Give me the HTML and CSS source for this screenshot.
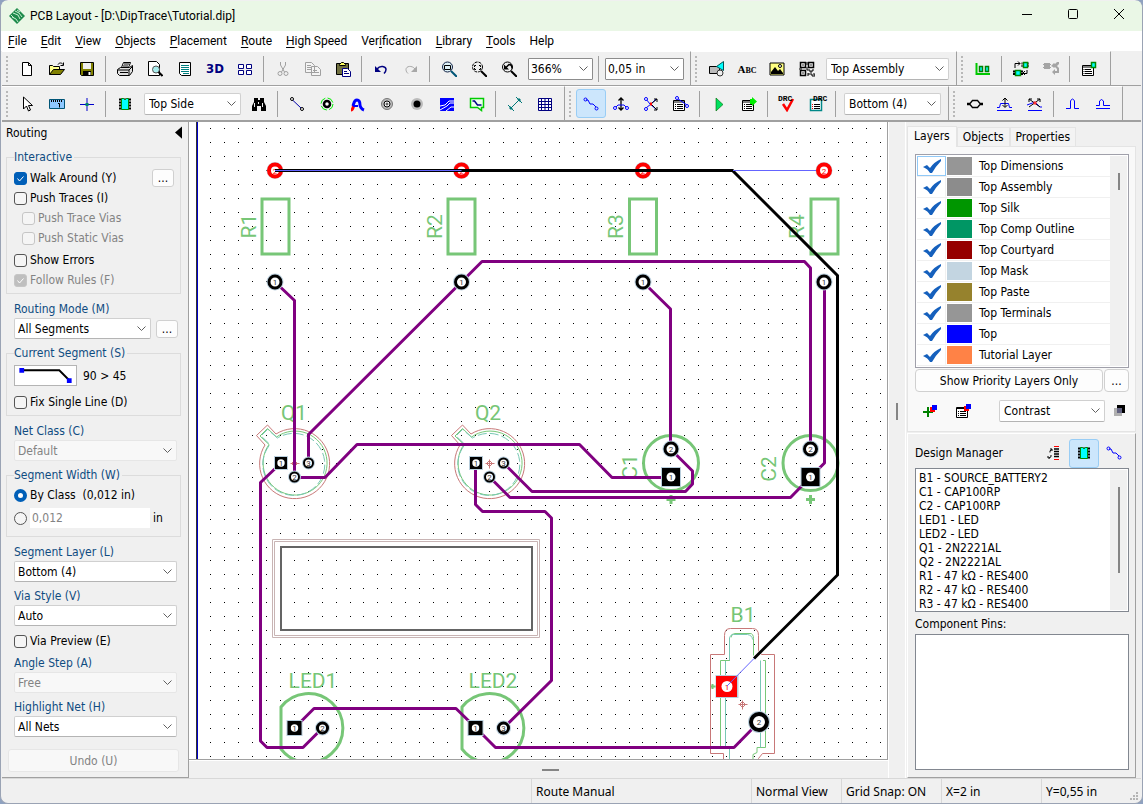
FILE: index.html
```html
<!DOCTYPE html>
<html lang="en">
<head>
<meta charset="utf-8">
<title>PCB Layout</title>
<link rel="stylesheet" href="styles.css">
</head>
<body>
<div class="window">
<header class="titlebar">
  <svg class="logo" viewBox="0 0 16 16"><path d="M8 0l8 8-8 8-8-8z" fill="#1d8a4b"/><path d="M2 7l3 3M4 5l5 2 2 4M6 3l4 2 3 4M3 9l4 2 2 3M8 2l3 2" stroke="#c9f0d2" fill="none"/></svg>
  <h1>PCB Layout - [D:\DipTrace\Tutorial.dip]</h1>
  <div class="caption-buttons">
    <button aria-label="Minimize"><svg viewBox="0 0 12 12"><path d="M1 6.500h10" stroke="#000"/></svg></button>
    <button aria-label="Maximize"><svg viewBox="0 0 12 12"><rect x="1.500" y="1.500" width="9" height="9" rx="1" fill="none" stroke="#000"/></svg></button>
    <button aria-label="Close"><svg viewBox="0 0 12 12"><path d="M1 1l10 10M11 1L1 11" stroke="#000"/></svg></button>
  </div>
</header>
<nav class="menu">
  <button><u>F</u>ile</button><button><u>E</u>dit</button><button><u>V</u>iew</button><button><u>O</u>bjects</button><button><u>P</u>lacement</button><button><u>R</u>oute</button><button><u>H</u>igh Speed</button><button>Ver<u>i</u>fication</button><button><u>L</u>ibrary</button><button><u>T</u>ools</button><button>Help</button>
</nav>

<div class="toolrow">
  <div class="band">
    <button class="tool" aria-label="New"><svg viewBox="0 0 16 16"><path d="M3.500 1.500h6l3 3v10h-9zM9.500 1.500v3h3" fill="#fff" stroke="#000"/></svg></button>
    <button class="tool" aria-label="Open"><svg viewBox="0 0 16 16"><path d="M.5 13.500v-9h3l1 1h6v3" fill="#ffff8c" stroke="#000"/><path d="M.5 13.500l4-5h11l-4 5z" fill="#808000" stroke="#000"/><path d="M9 3.500c1-2 4-2 5 0m.5-2v3h-3" fill="none" stroke="#000"/></svg></button>
    <button class="tool" aria-label="Save"><svg viewBox="0 0 16 16"><path d="M1.500 1.500h13v13h-12l-1-1z" fill="#808000" stroke="#000"/><path d="M4 2h8v6H4z" fill="#f0f0f0"/><path d="M4 10h8v5H4z"/><path d="M9.500 11h2v3h-2z" fill="#fff"/></svg></button>
    <i class="sep"></i>
    <button class="tool" aria-label="Print"><svg viewBox="0 0 16 16"><path d="M4.500 6.500l2-5h7l-2 5" fill="#fff" stroke="#000"/><path d="M.5 8.500l3-2h9l3-2v6l-3 4h-10l-2-2z" fill="#e0e0e0" stroke="#000"/><path d="M1 9h11v5M12 9l3-3M7 3h5M6 5h5M3 11.500h8" fill="none" stroke="#000"/></svg></button>
    <button class="tool" aria-label="Print preview"><svg viewBox="0 0 16 16"><path d="M1.500.5h8l3 3v11h-11z" fill="#fff" stroke="#000"/><circle cx="9" cy="8.500" r="3.500" fill="#aee" stroke="#555"/><path d="M11.500 11l4 4" stroke="#000" stroke-width="2"/></svg></button>
    <button class="tool" aria-label="Titles"><svg viewBox="0 0 16 16"><path d="M2.500 1.500h11v13h-9l-2-2z" fill="#fff" stroke="#000"/><path d="M4 4.500h8M4 6.500h8M4 8.500h8M4 10.500h8M6 12.500h6" stroke="#008080"/></svg></button>
    <button class="tool bold3d">3D</button>
    <button class="tool" aria-label="Panels"><svg viewBox="0 0 16 16" fill="#fff" stroke="#000080"><path d="M1.500 3.500h5v4h-5zM9.500 3.500h5v4h-5zM1.500 9.500h5v4h-5zM9.500 9.500h5v4h-5z"/></svg></button>
    <i class="sep"></i>
    <button class="tool" aria-label="Cut" disabled><svg viewBox="0 0 16 16" fill="none" stroke="#a0a0a0"><path d="M5.500 1v3l4 7M10.500 1v3l-4 7"/><circle cx="5" cy="12.500" r="2"/><circle cx="11" cy="12.500" r="2"/></svg></button>
    <button class="tool" aria-label="Copy" disabled><svg viewBox="0 0 16 16" fill="#f4f4f4" stroke="#a0a0a0"><path d="M.5 1.500h6l3 3v7h-9zM6.500 5.500h6l3 3v6h-9zM2 4.500h4M2 6.500h4M2 8.500h4M8 9.500h4M8 11.500h6"/></svg></button>
    <button class="tool" aria-label="Paste"><svg viewBox="0 0 16 16"><path d="M1.500 2.500h12v11h-12z" fill="#707040" stroke="#000"/><path d="M4.500 3.500l2-2h2l2 2v1h-6z" fill="#ffff60" stroke="#000"/><path d="M7.500 7.500h5l3 3v5h-8zM9 10.500h3M9 12.500h5" fill="#fff" stroke="#000080"/></svg></button>
    <i class="sep"></i>
    <button class="tool" aria-label="Undo"><svg viewBox="0 0 16 16"><path d="M4 8c3-4 9-3 9 .5 0 2-1 3-2 4" fill="none" stroke="#000080" stroke-width="1.500"/><path d="M2 5v6h6z" fill="#000080"/></svg></button>
    <button class="tool" aria-label="Redo" disabled><svg viewBox="0 0 16 16"><path d="M12 8c-3-4-9-3-9 .5 0 2 1 3 2 4" fill="none" stroke="#a8a8a8"/><path d="M14 5v6H8z" fill="#a8a8a8"/></svg></button>
    <i class="sep"></i>
    <button class="tool" aria-label="Zoom window"><svg viewBox="0 0 16 16"><circle cx="6.500" cy="6" r="5" fill="#dff2f8" stroke="#124"/><path d="M3.500 4.500h6v4h-6z" fill="none" stroke="#000"/><path d="M10 10l6 6" stroke="#057" stroke-width="2"/></svg></button>
    <button class="tool" aria-label="Zoom all"><svg viewBox="0 0 16 16"><circle cx="6.500" cy="6" r="5" fill="none" stroke="#000" stroke-dasharray="3 1"/><path d="M3.500 6V4.500H5M8 4.500h1.500V6M3.500 7v1.500H5M8 8.500h1.500V7" fill="none" stroke="#000"/><path d="M10 10l6 6" stroke="#000" stroke-width="2"/></svg></button>
    <button class="tool" aria-label="Previous zoom"><svg viewBox="0 0 16 16"><circle cx="6.500" cy="6" r="5" fill="none" stroke="#000"/><path d="M3 3.500v5h5z"/><path d="M5 6.500l3-3q3 0 3 4" fill="none" stroke="#000" stroke-width="1.500"/><path d="M10 10l6 6" stroke="#000" stroke-width="2"/></svg></button>
    <select class="combo dark w64" aria-label="Zoom"><option>366%</option></select>
    <i class="sep"></i>
    <select class="combo dark w78" aria-label="Grid"><option>0,05 in</option></select>
  </div>
  <div class="band">
    <button class="tool" aria-label="Shapes"><svg viewBox="0 0 16 16"><path d="M.5 5.500h10v7H.5z" fill="#bbb" stroke="#000"/><path d="M14.500.5v9l-7-4z" fill="#0ff" stroke="#055"/><circle cx="11" cy="12" r="3" fill="#eee" stroke="#333"/></svg></button>
    <button class="tool abc">Abc</button>
    <button class="tool" aria-label="Picture"><svg viewBox="0 0 16 16"><path d="M1 2h14v12H1z" fill="#ffff80" stroke="#000"/><path d="M2 11l4-5 3 4 2-2 3 4v1H2z"/><circle cx="11" cy="5" r="1.500" fill="#fff" stroke="#000"/></svg></button>
    <button class="tool" aria-label="Barcode"><svg viewBox="0 0 16 16" fill="none" stroke="#000"><path d="M1.500 1.500h5v5h-5zM9.500 1.500h5v5h-5zM1.500 9.500h5v5h-5zM3.500 4h1M11.500 4h1M3.500 12h1" stroke-width="1.500"/><path d="M8 1v3M8 6v3h3v2h2V9h2M9 12v3m0-2h4v2h3v-2h-2M0 8h3"/></svg></button>
    <select class="combo w122" aria-label="Drawing layer"><option>Top Assembly</option></select>
  </div>
  <div class="band">
    <button class="tool" aria-label="Arrange"><svg viewBox="0 0 16 16"><path d="M1.500 2v11H15" fill="none" stroke="#00c800" stroke-width="2"/><path d="M4.500 5.500h3v5h-3zM10.500 5.500h3v5h-3z" fill="#0ff" stroke="#008000" stroke-width="1.500"/></svg></button>
    <i class="sep"></i>
    <button class="tool" aria-label="Swap"><svg viewBox="0 0 16 16"><path d="M2.500 9.500h5v5h-5zM10.500 1.500h4v5h-4z" fill="#0ff" stroke="#080" stroke-width="1.500"/><path d="M0 10.500h2m6 0h2M0 13h2m6 0h2M8.500 2.500h1m6 0h1M8.500 5h1m6 0h1" stroke="#000" stroke-width="2"/><path d="M2 7V2.500h5M5 .5l2 2-2 2M14 9v3.500h-4M12 10l-2 2 2 2" fill="none" stroke="#000"/></svg></button>
    <button class="tool" aria-label="Replace" disabled><svg viewBox="0 0 16 16" fill="#a4a4a4"><path d="M1 2h6v6H1zM0 3h8v1H0zM0 6h8v1H0zM8 5l3-3 1 1 2-2h2v2l-2 2 2 2v1h-2l-2-2-1 1-1-1zM9 11l3-3v2h2V8h2v4h-4v2z"/></svg></button>
    <i class="sep"></i>
    <button class="tool" aria-label="Component properties"><svg viewBox="0 0 16 16"><path d="M1.500 4.500h11v10h-11zM1 6h12M4 8.500h6M4 10.500h7M4 12.500h7M2.500 8.500h1M2.500 10.500h1M2.500 12.500h1" fill="#fff" stroke="#000"/><path d="M10.500 1.500h4v5h-4z" fill="#0ff" stroke="#080" stroke-width="1.500"/></svg></button>
  </div>
</div>

<div class="toolrow second">
  <div class="band">
    <button class="tool" aria-label="Select"><svg viewBox="0 0 16 16"><path d="M4.500 1v12l3-3 2 5 2-1-2-4.500h4z" fill="#fff" stroke="#000"/></svg></button>
    <button class="tool" aria-label="Measure"><svg viewBox="0 0 16 16"><path d="M.5 3.500h15v9H.5z" fill="#8ec8ff" stroke="#057"/><path d="M2.500 4v2m2-2v2m2-2v2m2-2v2m2-2v2m2-2v2M9 7.500h1.500v4" stroke="#000" fill="none"/></svg></button>
    <button class="tool" aria-label="Origin"><svg viewBox="0 0 16 16"><path d="M8 2v13M1 8.500h14" stroke="#00c"/><path d="M6.500 7h3v3h-3z" fill="#086"/></svg></button>
    <i class="sep"></i>
    <button class="tool" aria-label="Place component"><svg viewBox="0 0 16 16"><use href="#chip"/></svg></button>
    <select class="combo w96" aria-label="Side"><option>Top Side</option></select>
    <button class="tool" aria-label="Find"><svg viewBox="0 0 16 16"><path d="M3 2h4v2h2V2h4v4l2 4v5h-5v-5H6v5H1v-5l2-4z"/><path d="M3.500 7v4M11.500 7v4M7.500 6v2" stroke="#eee"/></svg></button>
    <i class="sep"></i>
    <button class="tool" aria-label="Line"><svg viewBox="0 0 16 16"><path d="M3 3.500l9.500 9" stroke="#00a"/><circle cx="3" cy="3" r="1.500" fill="#fff" stroke="#000"/><circle cx="13" cy="13" r="1.500" fill="#fff" stroke="#000"/></svg></button>
    <button class="tool" aria-label="Via"><svg viewBox="0 0 16 16"><circle cx="8" cy="8" r="6" fill="none" stroke="#0e0" stroke-dasharray="7 2.400"/><circle cx="8" cy="8" r="3" fill="#fff" stroke="#000" stroke-width="2.500"/></svg></button>
    <button class="tool" aria-label="Connection"><svg viewBox="0 0 16 16" fill="none" stroke-width="3"><path d="M2 14c2 0 2-3 3-5" stroke="#f00"/><path d="M4 10c1-3 1-6 4-6s3 4 3 5 1 4 4 5" stroke="#00f"/><path d="M4 10h5" stroke="#00f" stroke-width="2"/></svg></button>
    <button class="tool" aria-label="Round pad"><svg viewBox="0 0 16 16"><circle cx="8" cy="8" r="5.500" fill="#bbb" stroke="#777"/><circle cx="8" cy="8" r="3" fill="#fff" stroke="#000"/><path d="M8 6.500v3M6.500 8h3" stroke="#333"/></svg></button>
    <button class="tool" aria-label="Hole"><svg viewBox="0 0 16 16"><circle cx="8" cy="8" r="6" fill="#bbb"/><circle cx="8" cy="8" r="3.500"/></svg></button>
    <button class="tool" aria-label="Copper pour"><svg viewBox="0 0 16 16"><path d="M1 2h14v13H1z" fill="#00f"/><path d="M1 10l5-1 4-4h5M1 14l7-4 3-3h4M7 15l5-4h3" fill="none" stroke="#fff"/></svg></button>
    <button class="tool" aria-label="Update pour"><svg viewBox="0 0 16 16"><path d="M1.500 2.500h13v9h-2v3l-4-3h-7z" fill="#efe" stroke="#0c0" stroke-width="1.500"/><path d="M3.500 5h2l3 4h4" fill="none" stroke="#008" stroke-width="1.500"/></svg></button>
    <i class="sep"></i>
    <button class="tool" aria-label="Dimension"><svg viewBox="0 0 16 16" stroke="#007878" fill="none"><path d="M3 13L13 3M1 9l6 6M9 1l6 6M3 10v3h3M10 3h3v3"/></svg></button>
    <button class="tool" aria-label="Table"><svg viewBox="0 0 16 16" fill="#fff" stroke="#000080"><path d="M1.500 2.500h13v12h-13zM1 5.500h14M1 8.500h14M1 11.500h14M4.500 2v13M8 2v13M11.500 2v13"/></svg></button>
  </div>
  <div class="band">
    <button class="tool on" aria-label="Route manual"><svg viewBox="0 0 16 16"><use href="#trace"/></svg></button>
    <button class="tool" aria-label="Edit traces"><svg viewBox="0 0 16 16"><path d="M8 2v12M5.500 4.500L8 2l2.500 2.500M5.500 11.500L8 14l2.500-2.500" fill="none" stroke="#000" stroke-width="1.300"/><path d="M2 12l3-3h6l3 3" fill="none" stroke="#00f"/><circle cx="2" cy="12" r="1.500" fill="#fff" stroke="#00f"/><circle cx="14" cy="12" r="1.500" fill="#fff" stroke="#00f"/></svg></button>
    <button class="tool" aria-label="Free edit"><svg viewBox="0 0 16 16" fill="none"><path d="M3 3l4 5 7 6M3 12l5-4 5-5" stroke="#00f"/><path d="M8 8l6-5M8 8l6 6M11 3h3v3M11 14h3v-3" stroke="#000"/><path d="M7 6.500h2v3H7z" fill="#f00"/><circle cx="3" cy="3" r="1.500" fill="#fff" stroke="#00f"/><circle cx="3" cy="13" r="1.500" fill="#fff" stroke="#00f"/></svg></button>
    <button class="tool" aria-label="Trace properties"><svg viewBox="0 0 16 16"><path d="M.5 4.500h11v10H.5zM1 6h10M4 8.500h6M4 10.500h6M4 12.500h6M2 8.500h1M2 10.500h1M2 12.500h1" fill="#fff" stroke="#000"/><path d="M4 2l4 3 6 4" fill="none" stroke="#00f"/><circle cx="4" cy="2" r="1.500" fill="#fff" stroke="#00f"/><circle cx="14" cy="10" r="1.500" fill="#fff" stroke="#00f"/></svg></button>
    <i class="sep"></i>
    <button class="tool" aria-label="Run autorouter"><svg viewBox="0 0 16 16"><path d="M5 2l7 6.500L5 15z" fill="#00e060" stroke="#060" stroke-width=".6"/></svg></button>
    <button class="tool" aria-label="Autorouter setup"><svg viewBox="0 0 16 16"><path d="M1.500 4.500h11v10h-11zM1 6h12M5 8.500h6M5 10.500h6M5 12.500h6M3 8.500h1M3 10.500h1M3 12.500h1" fill="#fff" stroke="#000"/><path d="M11 1l5 4.500-5 4.500V8H9V3h2z" fill="#0e0"/></svg></button>
    <i class="sep"></i>
    <button class="tool drc" aria-label="Check design rules"><svg viewBox="0 0 16 16"><path d="M4 8l4 6 6-11" fill="none" stroke="#f00" stroke-width="2.500"/></svg><b>DRC</b></button>
    <button class="tool drc right" aria-label="Design rules"><svg viewBox="0 0 16 16"><path d="M1.500 3.500h11v11h-11z" fill="#fff" stroke="#088" stroke-width="1.500"/><path d="M5 8.500h6M5 10.500h6M5 12.500h6" stroke="#000"/><path d="M3 8.500h1M3 10.500h1M3 12.500h1" stroke="#f00"/></svg><b>DRC</b></button>
    <i class="sep"></i>
    <select class="combo w96" aria-label="Layer"><option>Bottom (4)</option></select>
  </div>
  <div class="band">
    <button class="tool" aria-label="Differential pair"><svg viewBox="0 0 16 16" fill="none" stroke="#000" stroke-width="1.300"><path d="M0 7.500h3l2.500-3h5l2.500 3h3M0 8.500h3l2.500 3h5l2.500-3h3"/></svg></button>
    <button class="tool" aria-label="Edit pair"><svg viewBox="0 0 16 16" fill="none" stroke="#00f"><path d="M0 11.500h2.500l1-4h8l1 4H15M0 14.500h15"/><path d="M8 2v9M5.500 4.500L8 2l2.500 2.500M5.500 9L8 11.500 10.500 9" stroke="#000"/></svg></button>
    <button class="tool" aria-label="Free edit pair"><svg viewBox="0 0 16 16" fill="none" stroke="#00f"><path d="M0 9l8-3 5 5h2M1 14.500h14"/><path d="M2 3l11 8M13 3L2 11M2 6V3h3M10 3h3v3" stroke="#000"/><path d="M6.500 5.500h3v3h-3z" fill="#f33" stroke="none"/></svg></button>
    <i class="sep"></i>
    <button class="tool" aria-label="Meander"><svg viewBox="0 0 16 16" fill="none" stroke="#00f"><path d="M1 12.500h4.500V5q2-4 4 0v7.500H14"/></svg></button>
    <button class="tool" aria-label="Pair meander"><svg viewBox="0 0 16 16" fill="none" stroke="#00f"><path d="M1 9.500h3.500V5q2-3 4 0v4.500H15M1 12.500h14"/></svg></button>
  </div>
</div>

<main class="work">
<aside class="routing">
  <div class="pane-title">Routing<button aria-label="Collapse"><svg viewBox="0 0 8 14"><path d="M8 0v14L0 7z"/></svg></button></div>
  <fieldset class="inter"><legend>Interactive</legend>
    <div class="row"><label><input type="checkbox" checked>Walk Around (Y)</label><button class="dots">...</button></div>
    <div class="row"><label><input type="checkbox">Push Traces (I)</label></div>
    <div class="row sub"><label><input type="checkbox" disabled>Push Trace Vias</label></div>
    <div class="row sub"><label><input type="checkbox" disabled>Push Static Vias</label></div>
    <div class="row space2"><label><input type="checkbox">Show Errors</label></div>
    <div class="row"><label class="off"><input type="checkbox" checked disabled>Follow Rules (F)</label></div>
  </fieldset>
  <div class="field"><label for="mode">Routing Mode (M)</label><div class="pair"><select class="combo" id="mode"><option>All Segments</option></select><button class="dots">...</button></div></div>
  <fieldset class="current"><legend>Current Segment (S)</legend>
    <div class="segment"><svg viewBox="0 0 61 20"><path d="M6 4.500h39l11 11" fill="none" stroke="#000" stroke-width="2"/><path d="M3 2h5v5H3zM53 13h5v5h-5z" fill="#00f"/></svg><span>90 &gt; 45</span></div>
    <div class="row"><label><input type="checkbox">Fix Single Line (D)</label></div>
  </fieldset>
  <div class="field"><label for="net">Net Class (C)</label><select class="combo" id="net" disabled><option>Default</option></select></div>
  <fieldset class="width"><legend>Segment Width (W)</legend>
    <div class="row"><label><input type="radio" name="w" checked>By Class &nbsp;(0,012 in)</label></div>
    <div class="row custom"><input type="radio" name="w" aria-label="Custom width"><input type="text" value="0,012" disabled aria-label="Width"><span>in</span></div>
  </fieldset>
  <div class="field"><label for="slayer">Segment Layer (L)</label><select class="combo" id="slayer"><option>Bottom (4)</option></select></div>
  <div class="field tight"><label for="via">Via Style (V)</label><select class="combo" id="via"><option>Auto</option></select></div>
  <div class="row preview"><label><input type="checkbox">Via Preview (E)</label></div>
  <div class="field tighter"><label for="angle">Angle Step (A)</label><select class="combo" id="angle" disabled><option>Free</option></select></div>
  <div class="field tight"><label for="hl">Highlight Net (H)</label><select class="combo" id="hl"><option>All Nets</option></select></div>
  <button class="undo" disabled>Undo (U)</button>
</aside>

<section class="design">
<div class="board">
<svg>
  <defs>
    <g id="chip"><path d="M2 3.500h12M2 6.500h12M2 9.500h12M2 12.500h12" stroke="#000" stroke-width="2"/><path d="M4.500 2.500h2l1 1h1l1-1h2v11h-7z" fill="#0ff" stroke="#080"/></g>
    <g id="trace" fill="none" stroke="#00f"><path d="M3 4h2l2 4h3l3 3"/><circle cx="2.500" cy="3.500" r="1.500"/><circle cx="13.500" cy="12.500" r="1.500"/></g>
    <g id="tube" fill="none"><path d="M-18.500-29L-27-38-38-27.500-29.500-18A35 35 0 1 0-18.500-29z" stroke="#c87878"/><path d="M-18-26L-27-34.500-34.500-27-25.500-18.500A32 32 0 1 0-18-26z" stroke="#78c878"/><path d="M-17-25L-27-33.500-33.500-27-24.500-18.500A31 31 0 1 0-17-25z" stroke="#78c8b4" stroke-dasharray="9 3"/></g>
    <g id="mark" fill="none" stroke="#c87878"><path d="M-4 0h9M0-4v9"/><path d="M0-3L3 0 0 3-3 0z"/></g>
    <g id="rpad"><circle r="8.500" fill="#b9cedc"/><circle r="6" fill="#fff" stroke="#000" stroke-width="3"/></g>
    <g id="hot"><circle r="8.500" fill="#c7dae4"/><circle r="6" fill="#fff" stroke="#f00" stroke-width="4"/></g>
    <g id="spin"><circle r="6.500" fill="#b9cedc"/><circle r="4.500" fill="#fff" stroke="#000" stroke-width="2"/></g>
    <g id="sqpin"><path d="M-7-7H7V7H-7z" fill="#b9cedc"/><path d="M-6-6H6V6H-6z"/><circle r="3.700" fill="#fff"/></g>
  </defs>
  <g transform="translate(-189 -122)">
  <path id="grid" stroke="#000" shape-rendering="crispEdges"/>
  <path d="M196.500 122v3000" stroke="#333"/><path d="M197.500 122v3000" stroke="#0000c8"/>

  <g class="silk">
    <path d="M262 199h27v55h-27zM448 199h27v55h-27zM629.500 199h27v55h-27zM811 199h27v55h-27z"/>
    <circle cx="671" cy="463" r="27.500"/><circle cx="810.500" cy="463" r="27.500"/>
    <path d="M671 495v9M666.500 499.500h9M810.500 495v9M806 499.500h9"/>
    <path d="M281 707A34.500 34.500 0 1 1 281 749zM462 707A34.500 34.500 0 1 1 462 749z"/>
  </g>
  <g fill="none" stroke="#c8b4b4"><path d="M272.500 539.500h267v98h-267zM274.500 541.500h263v94h-263z"/><path d="M281 547h251v83H281z" stroke="#646464" stroke-width="2"/></g>
  <g class="names">
    <text transform="translate(256 226) rotate(-90)">R1</text><text transform="translate(442 226.500) rotate(-90)">R2</text><text transform="translate(623 226.500) rotate(-90)">R3</text><text transform="translate(804 226.500) rotate(-90)">R4</text>
    <text transform="translate(637 467) rotate(-90)">C1</text><text transform="translate(776 469) rotate(-90)">C2</text>
    <text x="294" y="420">Q1</text><text x="488" y="420">Q2</text><text x="313" y="688">LED1</text><text x="493" y="688">LED2</text><text x="743" y="622">B1</text>
  </g>
  <use href="#tube" x="294.500" y="463"/><use href="#tube" x="489.500" y="463"/>
  <use href="#mark" x="294.500" y="463.500"/><use href="#mark" x="489.500" y="463.500"/>
  <g fill="none">
    <path d="M723.500 770V753.500h-13v-99h14v-19q0-7 6-7h22q6 0 6 7v15l3 4h13v99h-12l-4 5v12" stroke="#c87878"/>
    <path d="M727 747.500h-6.500v-87h9.500M731 637.500q0-4 4-4h15q3.500 0 3.500 5v17M763 660.500h2.500v87h-8.500v5l-4 2v12" stroke="#78c878"/>
    <path d="M729.500 660.500v-23q1-3 4-3h14q5 1 5 5M725.500 661v87M760.500 660.500v87M729.500 748v24" stroke="#78c8b4"/>
    <path d="M712.500 684v5M711 686.500h5" stroke="#78c878" stroke-width="2"/>
  </g>
  <use href="#mark" x="742.500" y="704.500"/>

  <g class="copper">
    <path d="M275 282L294.500 300.500V477.500H325L357 444.500H579.500L612 477.500H670"/>
    <path d="M308.500 463V434.500L461.500 282 482 261.500H804.500L810.500 268V449"/>
    <path d="M281 463L260.500 482.500V741L267 747.500H303L322.500 728"/>
    <path d="M643 282L670.500 309V449L692.500 471V484L685.500 491.500H532L503.500 463"/>
    <path d="M489.500 477L510 497.500H790.500L810.500 477 824.500 463V282"/>
    <path d="M475.500 463V504.500L482.500 511.500H545L551.500 518V680.500L503.500 728"/>
    <path d="M294.500 728L314 708.500H456L476 728 495.500 747.500H734L759 722"/>
  </g>
  <use href="#hot" x="275" y="170.500"/><use href="#hot" x="461.500" y="170.500"/><use href="#hot" x="643" y="170.500"/><use href="#hot" x="824" y="170.500"/>
  <use href="#rpad" x="275" y="282"/><use href="#rpad" x="461.500" y="282"/><use href="#rpad" x="643" y="282"/><use href="#rpad" x="824" y="282"/>
  <use href="#sqpin" x="281" y="463"/><use href="#spin" x="308.500" y="463"/><use href="#spin" x="294.500" y="477"/>
  <use href="#sqpin" x="476" y="463"/><use href="#spin" x="503.500" y="463"/><use href="#spin" x="489.500" y="477"/>
  <use href="#rpad" x="671" y="449"/><use href="#rpad" x="810.500" y="449"/>
  <g><path d="M661 467h20v20h-20zM800.500 467h20v20h-20z" fill="#b9cedc"/><path d="M662 468h18v18h-18zM801.500 468h18v18h-18z"/><circle cx="671" cy="477" r="4.500" fill="#fff"/><circle cx="810.500" cy="477" r="4.500" fill="#fff"/></g>
  <g><path d="M286.500 720h16v16h-16zM467.500 720h16v16h-16z" fill="#b9cedc"/><path d="M287.500 721h14v14h-14zM468.500 721h14v14h-14z"/><circle cx="294.500" cy="728" r="3.700" fill="#fff"/><circle cx="475.500" cy="728" r="3.700" fill="#fff"/></g>
  <g transform="translate(322.500 728)"><circle r="7.500" fill="#b9cedc"/><circle r="5" fill="#fff" stroke="#000" stroke-width="3"/></g>
  <g transform="translate(503.500 728)"><circle r="7.500" fill="#b9cedc"/><circle r="5" fill="#fff" stroke="#000" stroke-width="3"/></g>
  <path d="M715.500 675h23v23h-23z" fill="#b9cedc"/><path d="M716 676h21v21h-21z" fill="#f00"/><circle cx="727" cy="686.500" r="5.500" fill="#fff"/>
  <circle cx="759" cy="722" r="11" fill="#b9cedc"/><circle cx="759" cy="722" r="8" fill="#fff" stroke="#000" stroke-width="4"/>
  <g class="pins">
    <text x="275" y="285">1</text><text x="461.500" y="285">1</text><text x="643" y="285">1</text><text x="824" y="285">1</text>
    <text x="671" y="452">2</text><text x="810.500" y="452">2</text><text x="671" y="480">1</text><text x="810.500" y="480">1</text>
    <text x="281" y="466">1</text><text x="308.500" y="466">3</text><text x="294.500" y="480">2</text>
    <text x="476" y="466">1</text><text x="503.500" y="466">3</text><text x="489.500" y="480">2</text>
    <text x="294.500" y="731">1</text><text x="322.500" y="731">2</text><text x="475.500" y="731">1</text><text x="503.500" y="731">3</text><text x="759" y="725">2</text>
    <g class="alert"><text x="275" y="173.500">2</text><text x="461.500" y="173.500">2</text><text x="643" y="173.500">2</text><text x="824" y="173.500">2</text><text x="727" y="689.500">1</text></g>
  </g>
  <path d="M275 170.500H732.500L837.500 275.500V575L754 658.500" fill="none" stroke="#000" stroke-width="3"/>
  <path d="M275 170.500H461.500M733 170.500H816M754 658.500L727 686" stroke="#6464ff"/>
  </g>
</svg>
</div>
<div class="split-v"><i></i></div>
<div class="split-h"><i></i></div>
</section>

<aside class="side">
  <div class="tabs"><button class="active">Layers</button><button>Objects</button><button>Properties</button></div>
  <section class="page">
    <div class="layers">
      <ul>
        <li><label><input type="checkbox" checked><i style="background:#969696"></i><span>Top Dimensions</span></label></li>
        <li><label><input type="checkbox" checked><i style="background:#8c8c8c"></i><span>Top Assembly</span></label></li>
        <li><label><input type="checkbox" checked><i style="background:#009600"></i><span>Top Silk</span></label></li>
        <li><label><input type="checkbox" checked><i style="background:#009664"></i><span>Top Comp Outline</span></label></li>
        <li><label><input type="checkbox" checked><i style="background:#960000"></i><span>Top Courtyard</span></label></li>
        <li><label><input type="checkbox" checked><i style="background:#c3d5e1"></i><span>Top Mask</span></label></li>
        <li><label><input type="checkbox" checked><i style="background:#96822d"></i><span>Top Paste</span></label></li>
        <li><label><input type="checkbox" checked><i style="background:#969696"></i><span>Top Terminals</span></label></li>
        <li><label><input type="checkbox" checked><i style="background:#0000ff"></i><span>Top</span></label></li>
        <li><label><input type="checkbox" checked><i style="background:#ff8246"></i><span>Tutorial Layer</span></label></li>
      </ul>
      <div class="scroll short"><i></i></div>
    </div>
    <div class="priority"><button>Show Priority Layers Only</button><button>...</button></div>
    <div class="layer-tools">
      <button class="tool" aria-label="Add layer"><svg viewBox="0 0 16 16"><path d="M6 4v10M1 9h10" stroke="#008000" stroke-width="2"/><path d="M8 4h5v5H8z" fill="#f00"/><path d="M10 2h5v5h-5z" fill="#00f"/></svg></button>
      <button class="tool" aria-label="Layer properties"><svg viewBox="0 0 16 16"><path d="M.5 4.500h11v10H.5zM1 5.500h11M4 8.500h6M4 10.500h6M4 12.500h6M2 8.500h1M2 10.500h1M2 12.500h1" fill="#fff" stroke="#000"/><path d="M8 3h5v5H8z" fill="#f00"/><path d="M10 1h5v5h-5z" fill="#00f"/></svg></button>
      <select class="combo" aria-label="Display mode"><option>Contrast</option></select>
      <button class="swatch" aria-label="Colors"><svg viewBox="0 0 12 12"><path d="M3 0h8v8H3z"/><path d="M0 3h8v8H0z" fill="#b0b0b0"/><path d="M3 3h5v5H3z" fill="#646482"/></svg></button>
    </div>
  </section>
  <section class="manager">
    <div class="manager-head"><h2>Design Manager</h2>
      <button class="tool" aria-label="Sort"><svg viewBox="0 0 16 16" fill="none"><path d="M8 1.500h5M8 14.500h5" stroke="#f00"/><path d="M8 4h5M8 6.500h5M8 9h5M8 11.500h5" stroke="#000" stroke-width="1.500"/><path d="M6 4.500q-3 1-2 3M3 13q3-1 2-3M4 4h2v2M2 11v2h2" stroke="#000"/></svg></button>
      <button class="tool on" aria-label="Components"><svg viewBox="0 0 16 16"><use href="#chip"/></svg></button>
      <button class="tool" aria-label="Nets"><svg viewBox="0 0 16 16"><use href="#trace"/></svg></button>
    </div>
    <div class="parts"><ul><li>B1 - SOURCE_BATTERY2</li><li>C1 - CAP100RP</li><li>C2 - CAP100RP</li><li>LED1 - LED</li><li>LED2 - LED</li><li>Q1 - 2N2221AL</li><li>Q2 - 2N2221AL</li><li>R1 - 47 kΩ - RES400</li><li>R2 - 47 kΩ - RES400</li><li>R3 - 47 kΩ - RES400</li></ul><div class="scroll long"><i></i></div></div>
    <h3>Component Pins:</h3>
    <div class="pinlist"></div>
  </section>
</aside>
</main>

<footer class="status"><span></span><span>Route Manual</span><span>Normal View</span><span>Grid Snap: ON</span><span>X=2 in</span><span>Y=0,55 in</span>
<svg class="grip" viewBox="0 0 10 10" fill="#b4b4b4"><path d="M6 0h2v2H6zM6 3h2v2H6zM3 3h2v2H3zM0 6h2v2H0zM3 6h2v2H3zM6 6h2v2H6z"/></svg></footer>
</div>
<script src="script.js"></script>
</body>
</html>
```

FILE: styles.css
```css
* { box-sizing: border-box; }
body { margin: 0; height: 100vh; background: #8fa2c0; color: #000; font-family: "DejaVu Sans Condensed", "DejaVu Sans", Tahoma, sans-serif; font-size: 12px; line-height: 16px; }
button, select, input { font: inherit; color: inherit; margin: 0; }
button { padding: 0; border: 0; background: none; }
h1, h2, h3 { margin: 0; font-size: 12px; font-weight: 400; }
ul { list-style: none; margin: 0; padding: 0; }
.window { display: flex; flex-direction: column; height: 100vh; padding: 1px 1px 0; border: 1px solid #9aa3b4; border-top: 0; border-radius: 8px; overflow: hidden; background: #f0f0f0; }

.titlebar { display: flex; align-items: center; flex: none; height: 30px; margin: 0 -1px; padding-left: 8px; background: #eaf7e6; font-family: Roboto, sans-serif; }
.logo { width: 16px; height: 16px; margin-right: 5px; }
.titlebar h1 { flex: 1; font-size: 12px; }
.caption-buttons { display: flex; }
.caption-buttons button { width: 46px; height: 28px; }
.caption-buttons svg { width: 12px; height: 12px; }
.menu { display: flex; flex: none; height: 20px; padding: 0 7px; gap: 14px; margin: 0 -1px; background: #fff; font-family: Roboto, sans-serif; }
.menu button { white-space: nowrap; }
.menu u { text-underline-offset: 2px; }

.toolrow { display: flex; flex: none; height: 35px; border-bottom: 1px solid #a0a0a0; }
.toolrow.second { height: 36px; border-bottom-width: 2px; }
.band { display: flex; align-items: center; padding: 0 6px 0 10px; border-right: 1px solid #a0a0a0; border-top: 1px solid #fff; background: repeating-linear-gradient(#b8b8b8 0 2px, transparent 2px 4px) 4px 4px / 2px 26px no-repeat; }
.band + .band { padding-left: 11px; }
.second .band { padding-right: 4px; }
.tool { display: inline-flex; align-items: center; justify-content: center; flex: none; position: relative; width: 30px; height: 29px; border-radius: 3px; }
.tool svg { width: 16px; height: 16px; }
.tool.on { border: 1px solid #99cdf5; background: #cce6fc; }
.sep { flex: none; width: 2px; height: 26px; margin: 0 3px; background: #a0a0a0; border-right: 1px solid #f0f0f0; }
.bold3d { color: #000080; font-weight: 700; font-size: 13px; }
.abc { font-family: "Liberation Serif", serif; font-variant: small-caps; font-weight: 700; font-size: 11px; }
.drc b { position: absolute; top: 6px; left: 6px; font-family: "Liberation Mono", monospace; font-size: 8px; line-height: 8px; }
.drc.right b { left: 11px; }

.combo { appearance: none; flex: none; min-width: 0; height: 22px; padding: 0 20px 0 4px; border: 1px solid #d0d0d0; border-bottom-color: #b4b4b4; border-radius: 2px; background: #fff url("data:image/svg+xml,%3Csvg xmlns='http://www.w3.org/2000/svg' width='9' height='6'%3E%3Cpath d='M.5.5l4 4 4-4' fill='none' stroke='%23606060'/%3E%3C/svg%3E") right 4px center no-repeat; }
.combo:disabled { color: #838383; border-color: #e6e6e6; background-color: #f8f8f8; opacity: 1; }
.combo.dark { border-color: #8c8c8c; border-radius: 1px; padding-left: 2px; }
.w64 { width: 65px; margin: 0 2px 0 4px; }
.w78 { width: 79px; margin-left: 2px; }
.w96 { width: 97px; margin: 0 3px 0 4px; }
.w122 { width: 123px; margin: 0 1px 0 4px; }

.work { display: flex; flex: 1; min-height: 0; margin: 0 -1px 0 0; }
.routing { flex: none; width: 187px; padding: 0 7px 5px 4px; border-right: 1px solid #a0a0a0; border-bottom: 1px solid #a0a0a0; }
.pane-title { display: flex; align-items: center; justify-content: space-between; height: 21px; margin-right: -2px; }
.pane-title button { width: 8px; height: 14px; }
.pane-title svg { display: block; width: 7px; height: 13px; }
fieldset { min-width: 0; margin: 6px 0 0; padding: 0 6px 3px 7px; border: 1px solid #dcdcdc; }
legend { height: 16px; margin: 0; padding: 0 2px 0 0; color: #0f4c81; }
.inter { padding-top: 3px; }
.current { padding-top: 4px; }
.width { padding-top: 2px; padding-bottom: 8px; }
.row { display: flex; align-items: center; justify-content: space-between; height: 20px; }
.row label { display: flex; align-items: center; gap: 3px; white-space: pre; }
.row.sub { padding-left: 8px; }
.row.sub label, .row .off { color: #838383; }
.space2 { margin-top: 2px; }
input[type="checkbox"], input[type="radio"] { appearance: none; flex: none; width: 13px; height: 13px; border: 1px solid #555; border-radius: 3px; background: #f5f5f5 center no-repeat; }
input[type="radio"] { border-radius: 50%; }
input[type="checkbox"]:checked { border-color: #005fb8; background-color: #005fb8; background-image: url("data:image/svg+xml,%3Csvg xmlns='http://www.w3.org/2000/svg' width='9' height='9'%3E%3Cpath d='M1.500 4.500l2 2.500 4-4.500' fill='none' stroke='white'/%3E%3C/svg%3E"); }
input[type="radio"]:checked { border: 4px solid #005fb8; background: #fff; }
input[type="checkbox"]:disabled { border-color: #c6c6c6; }
input[type="checkbox"]:disabled:checked { background-color: #bfbfbf; }
.dots { width: 22px; height: 18px; border: 1px solid #d0d0d0; border-radius: 3px; background: #fdfdfd; line-height: 14px; }
.field { display: flex; flex-direction: column; margin: 6px 4px 0 8px; }
.field label { height: 18px; line-height: 18px; color: #0f4c81; }
.field .combo { height: 21px; padding-left: 3px; }
.field.tight { margin-top: 5px; }
.field.tighter { margin-top: 3px; }
.pair { display: flex; align-items: center; justify-content: space-between; margin-right: -1px; }
.pair .combo { flex: 1; margin-right: 5px; }
.segment { display: flex; align-items: center; gap: 6px; margin-bottom: 6px; }
.segment svg { width: 63px; height: 21px; border: 1px solid #b4b4b4; background: #fff; }
.custom { justify-content: flex-start; gap: 3px; height: 20px; margin-top: 3px; }
.custom input[type="text"] { width: 120px; height: 20px; padding: 0 2px; border: 0; background: #fff; color: #838383; }
.preview { margin: 5px 4px 0 8px; }
.undo { display: block; width: calc(100% - 4px); height: 23px; margin: 12px 0 0 2px; border: 1px solid #e6e6e6; border-radius: 3px; background: #f8f8f8; color: #838383; }

.design { display: grid; flex: 1; grid-template: minmax(0, 1fr) 18px / minmax(0, 1fr) 18px; min-width: 0; }
.board { overflow: hidden; background: #fff; border-right: 1px solid #a0a0a0; border-bottom: 1px solid #a0a0a0; }
.board svg { display: block; width: 100%; height: 100%; }
.split-v, .split-h { display: flex; align-items: center; justify-content: center; border: 1px solid #fff; border-width: 0 1px 0 1px; }
.split-h { grid-column: 1; border-width: 1px 0 0; }
.split-v { grid-row: 1 / 3; grid-column: 2; }
.split-h { grid-row: 2; }
.split-h i { width: 17px; height: 2px; margin-left: 24px; background: #858585; }
.split-v i { width: 2px; height: 17px; margin-top: -78px; background: #858585; }
.silk { fill: none; stroke: #77c677; stroke-width: 3; }
.names { fill: #77c677; font: 400 21px Roboto, sans-serif; text-anchor: middle; }
.copper { fill: none; stroke: #800080; stroke-width: 3; stroke-linejoin: round; }
.pins { fill: #333; font: 8px Roboto, sans-serif; text-anchor: middle; }
.alert { fill: #f00; }

.side { display: flex; flex-direction: column; flex: none; width: 236px; padding: 4px 6px 0 1px; }
.tabs { display: flex; align-items: flex-end; flex: none; height: 20px; }
.tabs button { height: 19px; padding: 0 5px; border: 1px solid #e4e4e4; border-bottom: 0; background: #f3f3f3; }
.tabs .active { height: 21px; margin-bottom: -1px; padding: 0 6px 3px; background: #f9f9f9; z-index: 1; }
.page { flex: none; padding: 7px 6px 1px 7px; border: 1px solid #e4e4e4; background: #f9f9f9; }
.layers { display: flex; height: 214px; border: 1px solid #a0a0aa; background: #fff; padding: 1px; }
.layers ul { flex: 1; }
.layers li { height: 21px; border-bottom: 1px solid #f0f0f0; }
.layers label { display: flex; align-items: center; height: 20px; }
.layers input[type="checkbox"] { width: 29px; height: 20px; border: 1px solid transparent; border-radius: 0; border-right-color: #f0f0f0; background: url("data:image/svg+xml,%3Csvg xmlns='http://www.w3.org/2000/svg' width='20' height='16'%3E%3Cpath d='M1 9l4-2 3 3q4-6 11-9v2q-5 5-9 12H8q-2-4-7-6z' fill='%231560bd'/%3E%3C/svg%3E") center no-repeat; }
.layers li:first-child input[type="checkbox"] { border-color: #91c9f7; }
.layers label i { width: 25px; height: 18px; margin: 0 7px 0 1px; }
.scroll { flex: none; width: 17px; padding-left: 8px; background: #f0f0f0; }
.scroll i { display: block; width: 2px; background: #858585; }
.short i { height: 17px; margin-top: 17px; }
.long i { height: 86px; margin-top: 17px; }
.priority { display: flex; gap: 1px; margin-top: 1px; }
.priority button { width: 25px; height: 23px; border: 1px solid #d0d0d0; border-radius: 4px; background: #fdfdfd; }
.priority button:first-child { flex: 1; }
.layer-tools { display: flex; align-items: center; height: 38px; }
.layer-tools .tool { margin-right: 4px; }
.layer-tools .combo { flex: 1; height: 22px; margin: 0 9px 0 16px; }
.swatch { width: 12px; height: 12px; margin-right: 3px; }
.swatch svg { display: block; width: 12px; height: 12px; }
.manager { display: flex; flex-direction: column; flex: 1; min-height: 0; margin-top: 1px; padding: 4px 6px 7px 7px; border: 1px solid #fff; border-right-color: #a0a0a0; border-bottom-color: #a0a0a0; }
.manager-head { display: flex; align-items: center; flex: none; height: 30px; }
.manager-head h2 { flex: 1; }
.parts { display: flex; flex: none; height: 144px; padding: 1px; border: 1px solid #828790; background: #fff; overflow: hidden; }
.parts ul { flex: 1; padding: 1px 2px; line-height: 14px; }
.manager h3 { flex: none; padding: 4px 0 2px; }
.pinlist { flex: 1; border: 1px solid #828790; background: #fff; }

.status { display: grid; flex: none; grid-template-columns: 530px 220px 90px 100px 100px 1fr; position: relative; height: 25px; border-top: 1px solid #d8d8d8; font-family: "Noto Sans", sans-serif; }
.status span { padding: 5px 0 0 4px; border-right: 1px solid #d8d8d8; white-space: nowrap; }
.status span:last-of-type { border: 0; }
.grip { position: absolute; right: 1px; bottom: 1px; width: 10px; height: 10px; }
```

FILE: script.js
```js
// Grid dots every 0,05 in, snapped to whole pixels.
const step = 13.95;
let d = '';
for (let r = 0; r < 64; r++)
  for (let c = 0; c < 130; c++)
    d += `M${Math.round(210 + c * step)} ${Math.round(128 + r * step) + 0.5}h1`;
document.getElementById('grid').setAttribute('d', d);
```
